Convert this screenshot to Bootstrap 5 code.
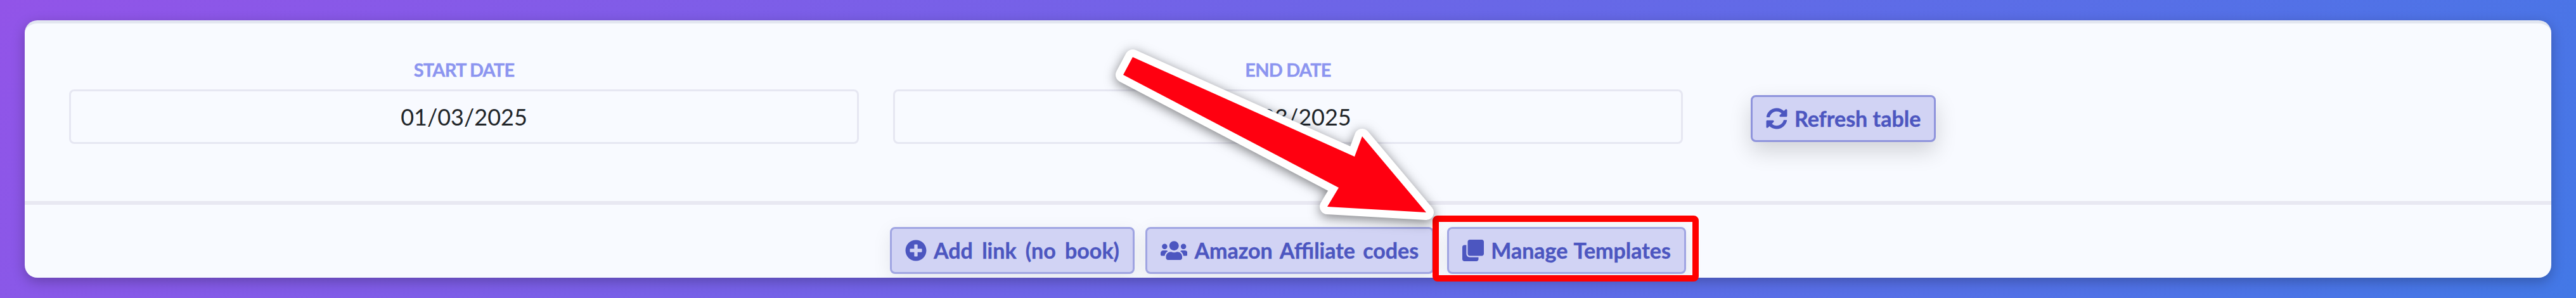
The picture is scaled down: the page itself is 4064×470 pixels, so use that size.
<!DOCTYPE html>
<html lang="en">
<head>
<meta charset="utf-8">
<title>Links</title>
<link href="https://cdn.jsdelivr.net/npm/bootstrap@5.3.0/dist/css/bootstrap.min.css" rel="stylesheet">
<style>
html,body{height:100%}
body{margin:0;padding:32px 39px;background:linear-gradient(135deg,#9254e8,#4378e6);font-family:"Lato","Noto Sans",sans-serif;position:relative;overflow:hidden}
.panel{height:406px;background:#f8faff;border:0;border-top:5px solid #e2e6f0;border-radius:20px;box-shadow:0 6px 20px rgba(0,0,0,.25);overflow:hidden}
.panel-top{height:280px;padding:0 70px;border-bottom:0}
.panel-top .row{--bs-gutter-x:54px}
.date-label{display:block;margin:0 0 16px;padding-top:58px;line-height:30px;font-size:29px;letter-spacing:-.8px;font-weight:700;-webkit-text-stroke:.4px #8c95f0;color:#8c95f0;text-align:center;text-transform:uppercase}
.date-input{height:86px;padding:0;font-size:36px;line-height:1;color:#212529;text-align:center;background:#f8faff;border:3px solid #e6e7f2;border-radius:8px}
.panel-rule{height:6px;background:#e8e8f2}
.panel-foot{height:115px;padding-top:35px;gap:17px}
.act{display:inline-flex;align-items:center;gap:11px;height:74px;padding:0 21px;font-size:34px;font-weight:700;-webkit-text-stroke:.4px #4c56c0;line-height:1;color:#4c56c0;background:#d1d3f4;border:3px solid #a0a5e2;border-radius:8px;box-shadow:0 8px 30px rgba(0,0,0,.08);white-space:nowrap}
.act svg{height:34px;fill:currentColor;flex:none}
.act-main{margin:113px 0 0 53px;border-color:#8f94dc;box-shadow:0 14px 34px rgba(0,0,0,.16)}
.act-add{word-spacing:6px}
.act-amazon{word-spacing:4px}
.act-last{margin-left:4px;word-spacing:2px}
.callout{position:absolute;left:0;top:0;width:4064px;height:470px;pointer-events:none}
.callout-arrow{filter:drop-shadow(0 4px 9px rgba(0,0,0,.5))}
</style>
</head>
<body>
<div class="card panel">
  <div class="panel-top">
    <div class="row">
      <div class="col-4">
        <label class="form-label date-label" for="d1">Start date</label>
        <input id="d1" class="form-control date-input" type="text" value="01/03/2025">
      </div>
      <div class="col-4">
        <label class="form-label date-label" for="d2">End date</label>
        <input id="d2" class="form-control date-input" type="text" value="31/03/2025">
      </div>
      <div class="col-4">
        <button type="button" class="btn act act-main">
          <svg viewBox="0 0 512 512"><path d="M370.72 133.28C339.458 104.008 298.888 87.962 255.848 88c-77.458.068-144.328 53.178-162.791 126.85-1.344 5.363-6.122 9.15-11.651 9.15H24.103c-7.498 0-13.194-6.807-11.807-14.176C33.933 94.924 134.813 8 256 8c66.448 0 126.791 26.136 171.315 68.685L463.03 40.97C478.149 25.851 504 36.559 504 57.941V192c0 13.255-10.745 24-24 24H345.941c-21.382 0-32.09-25.851-16.971-40.971l41.75-41.749zM32 296h134.059c21.382 0 32.09 25.851 16.971 40.971l-41.75 41.75c31.262 29.273 71.835 45.319 114.876 45.28 77.418-.07 144.315-53.144 162.787-126.849 1.344-5.363 6.122-9.15 11.651-9.15h57.304c7.498 0 13.194 6.807 11.807 14.176C478.067 417.076 377.187 504 256 504c-66.448 0-126.791-26.136-171.315-68.685L48.97 471.03C33.851 486.149 8 475.441 8 454.059V320c0-13.255 10.745-24 24-24z"/></svg>
          Refresh table
        </button>
      </div>
    </div>
  </div>
  <div class="panel-rule"></div>
  <div class="panel-foot d-flex justify-content-center align-items-start">
    <button type="button" class="btn act act-add">
      <svg viewBox="0 0 512 512"><path d="M256 8C119 8 8 119 8 256s111 248 248 248 248-111 248-248S393 8 256 8zm144 276c0 6.6-5.4 12-12 12h-92v92c0 6.6-5.4 12-12 12h-56c-6.6 0-12-5.4-12-12v-92h-92c-6.6 0-12-5.4-12-12v-56c0-6.6 5.4-12 12-12h92v-92c0-6.6 5.4-12 12-12h56c6.6 0 12 5.4 12 12v92h92c6.6 0 12 5.4 12 12v56z"/></svg>
      Add link (no book)
    </button>
    <button type="button" class="btn act act-amazon">
      <svg viewBox="0 0 640 512"><path d="M96 224c35.3 0 64-28.7 64-64s-28.7-64-64-64-64 28.7-64 64 28.7 64 64 64zm448 0c35.3 0 64-28.7 64-64s-28.7-64-64-64-64 28.7-64 64 28.7 64 64 64zm32 32h-64c-17.6 0-33.5 7.1-45.1 18.6 40.3 22.1 68.9 62 75.1 109.4h66c17.7 0 32-14.3 32-32v-32c0-35.3-28.7-64-64-64zm-256 0c61.9 0 112-50.1 112-112S381.9 32 320 32 208 82.1 208 144s50.1 112 112 112zm76.8 32h-8.3c-20.8 10-43.9 16-68.5 16s-47.6-6-68.5-16h-8.3C179.6 288 128 339.6 128 403.2V432c0 26.5 21.5 48 48 48h288c26.5 0 48-21.5 48-48v-28.8c0-63.6-51.6-115.2-115.2-115.2zm-223.7-13.4C161.5 263.1 145.6 256 128 256H64c-35.3 0-64 28.7-64 64v32c0 17.7 14.3 32 32 32h65.9c6.3-47.4 34.9-87.3 75.2-109.4z"/></svg>
      Amazon Affiliate codes
    </button>
    <button type="button" class="btn act act-last">
      <svg viewBox="0 0 512 512"><path d="M464 0c26.51 0 48 21.49 48 48v288c0 26.51-21.49 48-48 48H176c-26.51 0-48-21.49-48-48V48c0-26.51 21.49-48 48-48h288M176 416c-44.112 0-80-35.888-80-80V128H48c-26.51 0-48 21.49-48 48v288c0 26.51 21.49 48 48 48h288c26.51 0 48-21.49 48-48v-48H176z"/></svg>
      Manage Templates
    </button>
  </div>
</div>
<svg class="callout" viewBox="0 0 4064 470" aria-hidden="true">
  <rect x="2265" y="345" width="410" height="94" rx="3" fill="none" stroke="#ff0000" stroke-width="10"/>
  <g class="callout-arrow">
    <polygon points="1787,90 2137,247 2149,215 2250,335 2094,326 2112,296 1772,118" fill="#fff" stroke="#fff" stroke-width="24" stroke-linejoin="round"/>
    <polygon points="1787,90 2137,247 2149,215 2250,335 2094,326 2112,296 1772,118" fill="#ff0010"/>
  </g>
</svg>
<script src="https://cdn.jsdelivr.net/npm/bootstrap@5.3.0/dist/js/bootstrap.bundle.min.js"></script>
</body>
</html>
